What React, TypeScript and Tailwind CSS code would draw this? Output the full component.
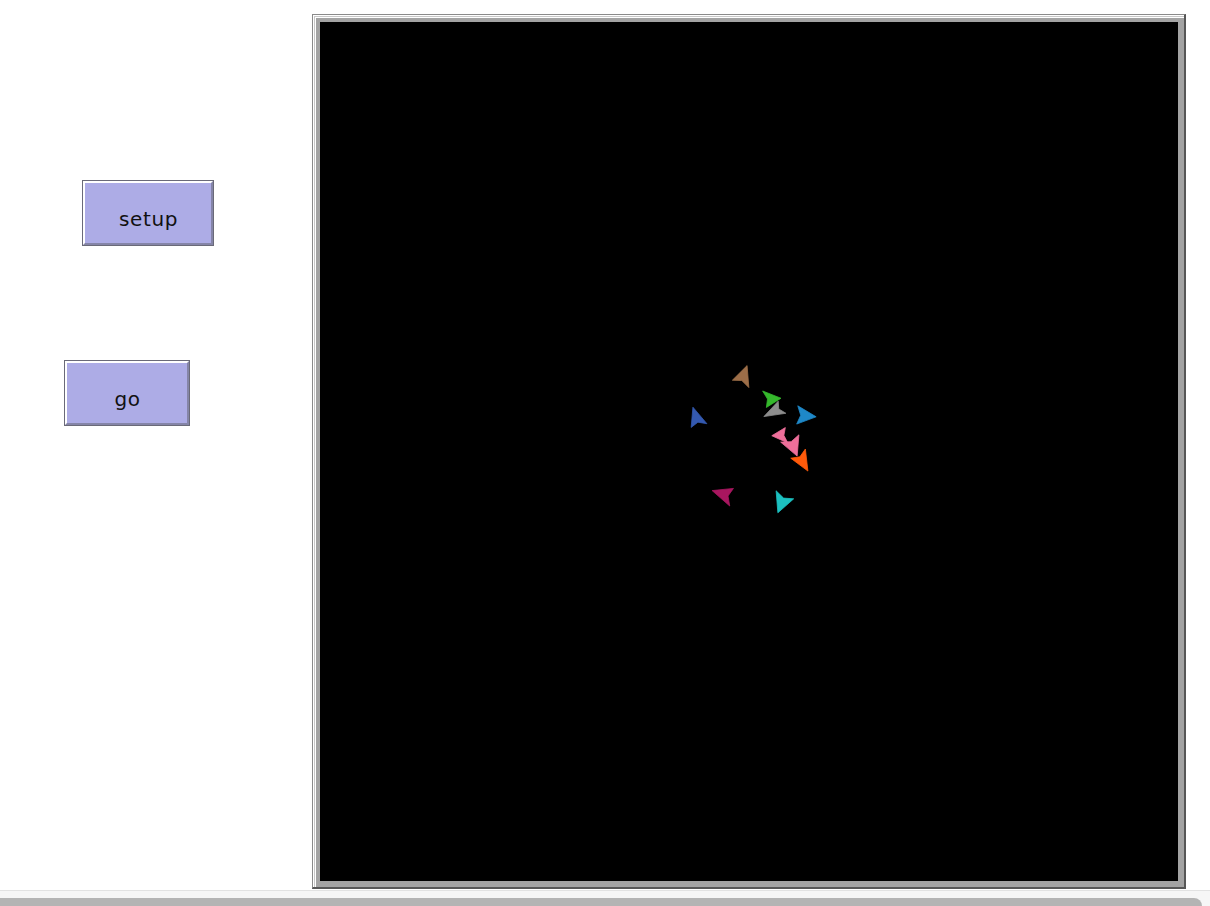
import React from "react";

type P = [number, number];
type Turtle = { c: string; t: P; b1: P; b2: P };

const turtles: Turtle[] = [
  { c: "#9d6e48", t: [746.7, 366.7], b1: [733.3, 380], b2: [748.3, 386.7] },
  { c: "#8d8d8d", t: [765, 416], b1: [778, 402], b2: [785, 413] },
  { c: "#35b82c", t: [780, 398.3], b1: [763.3, 391.7], b2: [766.7, 406.7] },
  { c: "#3459b0", t: [693.3, 408.3], b1: [691.7, 426.7], b2: [706, 423.3] },
  { c: "#1e88c8", t: [815, 416.7], b1: [798.3, 406.7], b2: [797.3, 423.3] },
  { c: "#ee6f9a", t: [772.7, 435.7], b1: [785, 428.3], b2: [787.3, 442.3] },
  { c: "#ee6f9a", t: [796.7, 455], b1: [798.3, 435.7], b2: [781.7, 442.3] },
  { c: "#ff5a0a", t: [807.3, 470], b1: [805, 450], b2: [791.7, 458.3] },
  { c: "#a8165f", t: [713.3, 491], b1: [732.7, 489], b2: [729.3, 505] },
  { c: "#1cc0c0", t: [778.3, 511.7], b1: [776.7, 491.7], b2: [792.7, 499] },
];

function pts(tu: Turtle): string {
  const cx = (tu.t[0] + tu.b1[0] + tu.b2[0]) / 3;
  const cy = (tu.t[1] + tu.b1[1] + tu.b2[1]) / 3;
  const s = 1.1;
  const sc = (p: P): P => [cx + (p[0] - cx) * s, cy + (p[1] - cy) * s];
  const t = sc(tu.t);
  const b1 = sc(tu.b1);
  const b2 = sc(tu.b2);
  const m: P = [(b1[0] + b2[0]) / 2, (b1[1] + b2[1]) / 2];
  const k = 45 / 245;
  const n: P = [m[0] + k * (t[0] - m[0]), m[1] + k * (t[1] - m[1])];
  return [t, b1, n, b2].map((p) => `${p[0].toFixed(2)},${p[1].toFixed(2)}`).join(" ");
}

function NLButton({ label, className }: { label: string; className: string }) {
  return (
    <div className={`border border-[#6a6a78] ${className}`}>
      <div className="w-full h-full border-t-2 border-l-2 border-white border-r-2 border-b-2 border-r-[#8585a8] border-b-[#8585a8] bg-[#adace6] flex justify-center pt-[26px]">
        <span className="text-[20px] leading-[20px] tracking-[0.6px] pl-[1px] text-[#111] font-['DejaVu_Sans',sans-serif]">
          {label}
        </span>
      </div>
    </div>
  );
}

export default function App() {
  return (
    <div className="w-[1210px] h-[906px] bg-white flex flex-col overflow-hidden">
      <div className="h-[890px] flex flex-row">
        <div className="w-[312px] flex flex-col items-start">
          <NLButton label="setup" className="mt-[180px] ml-[82px] w-[132px] h-[66px]" />
          <NLButton label="go" className="mt-[114px] ml-[64px] w-[126px] h-[66px]" />
        </div>
        <div className="mt-[14px] self-start border-l border-t border-[#8a8a8a] border-r-2 border-b-2 border-r-[#575757] border-b-[#575757]">
          <div className="border-l border-t border-white">
            <div className="border-l border-t border-[#c8c8c8]">
              <div className="border-l border-t border-white">
                <div className="border-l-4 border-t-4 border-r-[6px] border-b-[6px] border-[#a3a3a3]">
                  <div className="w-[858px] h-[859px] bg-black">
                    <svg width="858" height="859" viewBox="320 22 858 859">
                      {turtles.map((tu, i) => (
                        <polygon
                          key={i}
                          points={pts(tu)}
                          fill={tu.c}
                          stroke={tu.c}
                          strokeWidth={0.8}
                          strokeLinejoin="miter"
                        />
                      ))}
                    </svg>
                  </div>
                </div>
              </div>
            </div>
          </div>
        </div>
      </div>
      <div className="h-[16px] border-t border-[#e2e2e2] bg-[#f6f6f6] flex flex-col justify-end">
        <div className="h-[8px] w-[1202px] bg-[#b4b4b4] rounded-tr-[8px]" />
      </div>
    </div>
  );
}
